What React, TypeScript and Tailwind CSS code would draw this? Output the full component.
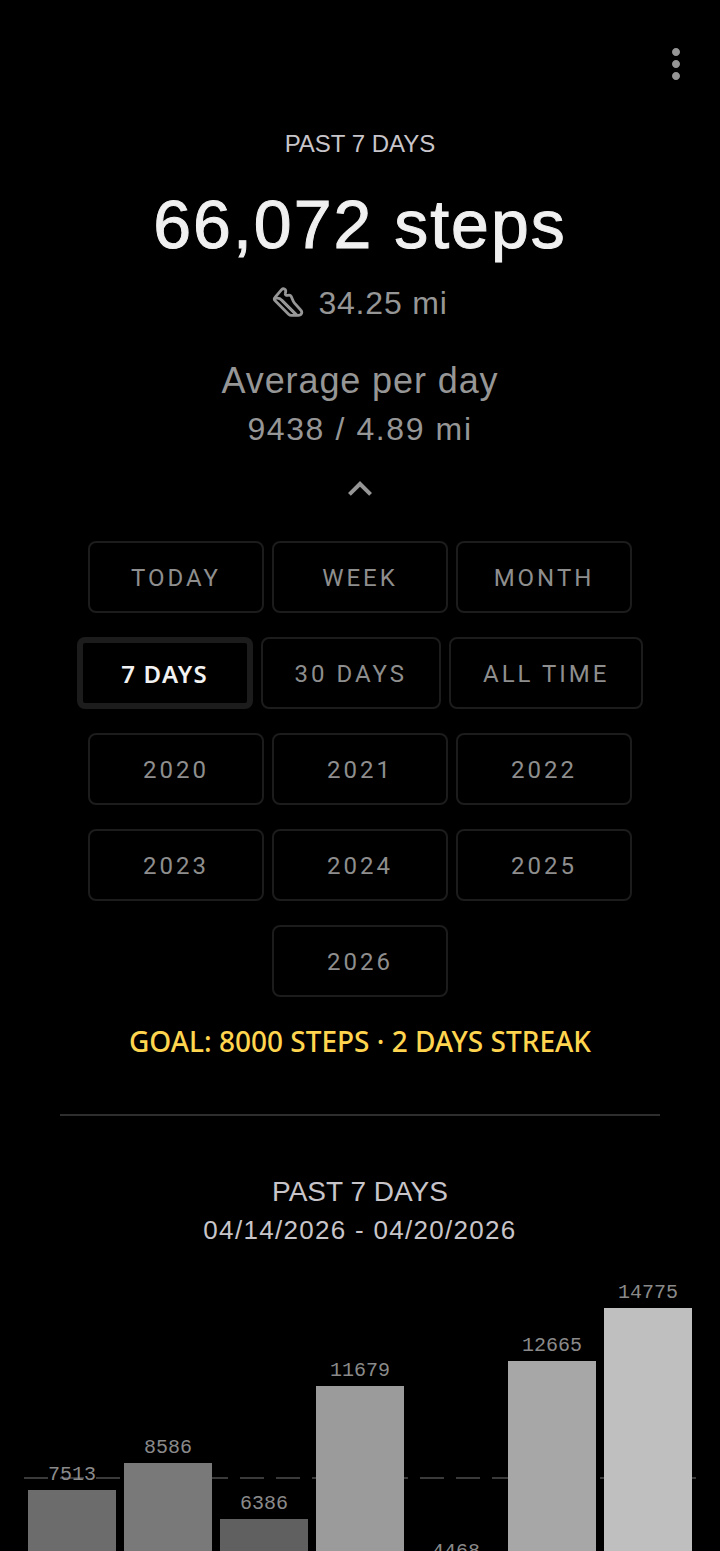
import React, { useState } from 'react';
import { MdExpandLess, MdMoreVert } from 'react-icons/md';

interface DayEntry {
  id: string;
  steps: number;
  color: string;
}

const PERIODS = [
  'TODAY', 'WEEK', 'MONTH',
  '7 DAYS', '30 DAYS', 'ALL TIME',
  '2020', '2021', '2022', '2023', '2024', '2025', '2026',
];

const DAYS: DayEntry[] = [
  { id: '04/14', steps: 7513, color: 'bg-[#6c6c6c]' },
  { id: '04/15', steps: 8586, color: 'bg-[#797979]' },
  { id: '04/16', steps: 6386, color: 'bg-[#606060]' },
  { id: '04/17', steps: 11679, color: 'bg-[#9b9b9b]' },
  { id: '04/18', steps: 4468, color: 'bg-[#484848]' },
  { id: '04/19', steps: 12665, color: 'bg-[#a7a7a7]' },
  { id: '04/20', steps: 14775, color: 'bg-[#bfbfbf]' },
];

const GOAL = 8000;
const MAX_BAR = 371;
const maxSteps = Math.max(...DAYS.map((d) => d.steps));
const toHeight = (steps: number) => Math.round((steps / maxSteps) * MAX_BAR);

const ShoeIcon: React.FC<{ className?: string }> = ({ className }) => (
  <svg viewBox="0 1 32 32" fill="none" stroke="currentColor" strokeWidth="2.8" strokeLinejoin="round" strokeLinecap="round" className={className} aria-hidden="true">
    <path d="M9.8 3.400 3 11.400c-.9 1-.8 2.400.2 3.400l13.400 13.400c.8.8 1.700 1.200 2.800 1.200h6.900c3.300 0 4.500-3.300 2.400-5.400l-6.200-6.900c-1.800-2-2.300-4.700-3.300-6.700-.7-1.300-1.900-1.500-3.300-1.100-1.600.4-2.900-.4-2.600-1.800l.4-2.100c.4-2.200-2.400-3.500-3.900-2Z" />
    <path d="M3.400 12.400c2.600-.6 4.800.1 6.400 1.800l14.400 14.600" />
    <path d="m10 14.400 14.200 14.200" />
  </svg>
);

const PeriodButton: React.FC<{ label: string; active: boolean; onClick: () => void }> = ({ label, active, onClick }) => (
  <button
    onClick={onClick}
    aria-pressed={active}
    className={`h-18 min-w-44 rounded-lg border-[#1c1c1c] pt-0.5 text-2xl ${
      active
        ? "border-6 px-7 font-['Noto_Sans',sans-serif] font-semibold tracking-wider text-[#f2f2f2]"
        : 'border-2 px-8 tracking-[3px] text-[#8e8e8e]'
    }`}
  >
    {label}
  </button>
);

const StepsChart: React.FC = () => (
  <div className="relative mt-8 flex h-[399px] items-end gap-2 px-7">
    {/* Goal line, drawn behind the bars */}
    <div
      className="absolute inset-x-6 h-0.5 bg-[repeating-linear-gradient(90deg,#3a3a3a_0_24px,transparent_24px_36px)]"
      style={{ bottom: toHeight(GOAL) - 1 }}
    />
    {DAYS.map((day) => (
      <div key={day.id} className="relative flex flex-1 flex-col items-center">
        <span className="mb-[3px] font-['Liberation_Mono',monospace] text-xl leading-6 text-[#8a8a8a]">{day.steps}</span>
        <div className={`w-full ${day.color}`} style={{ height: toHeight(day.steps) }} />
      </div>
    ))}
  </div>
);

const App: React.FC = () => {
  const [period, setPeriod] = useState('7 DAYS');
  const [expanded, setExpanded] = useState(true);

  return (
    <div className="h-screen overflow-y-auto bg-black font-['Liberation_Sans',Arial,sans-serif] text-[#969696] [scrollbar-width:none]">
      <header className="flex justify-end px-5 pt-10">
        <button aria-label="Menu">
          <MdMoreVert className="size-12" />
        </button>
      </header>

      <main>
        <section className="flex flex-col items-center pt-10">
          <h2 className="text-2xl text-[#c8c5ca]">PAST 7 DAYS</h2>
          <h1 className="mt-6 text-[68px] leading-20 tracking-[2px] text-[#f0f0f0] [-webkit-text-stroke:1px]">66,072 steps</h1>
          <div className="mt-[19px] flex items-center gap-3.5 text-[32px] leading-10 tracking-wide">
            <ShoeIcon className="size-8" />
            <span>34.25 mi</span>
          </div>
          <p className="mt-[34px] text-4xl leading-12 tracking-wide">Average per day</p>
          <p className="text-[32px] leading-12 tracking-wider">9438 / 4.89 mi</p>
          <button className="mt-3" aria-label="Toggle periods" aria-expanded={expanded} onClick={() => setExpanded(!expanded)}>
            <MdExpandLess className={`size-12 ${expanded ? '' : 'rotate-180'}`} />
          </button>
        </section>

        {expanded && (
          <div className="mt-7 flex flex-wrap justify-center gap-x-2 gap-y-6 px-15 font-[Roboto,sans-serif]">
            {PERIODS.map((p) => (
              <PeriodButton key={p} label={p} active={p === period} onClick={() => setPeriod(p)} />
            ))}
          </div>
        )}

        <p className="mt-6 text-center font-['Noto_Sans',sans-serif] text-[28px] leading-10 font-medium text-[#ffd54f]">
          GOAL: {GOAL} STEPS · 2 DAYS STREAK
        </p>

        <hr className="mx-15 mt-[53px] border-t-2 border-[#2e2e2e]" />

        <section className="pt-14 text-center text-[#c8c5ca]">
          <h3 className="text-[28px] leading-10">PAST 7 DAYS</h3>
          <p className="text-[26px] leading-9 tracking-wider">04/14/2026 - 04/20/2026</p>
          <StepsChart />
        </section>
      </main>
    </div>
  );
};

export default App;
